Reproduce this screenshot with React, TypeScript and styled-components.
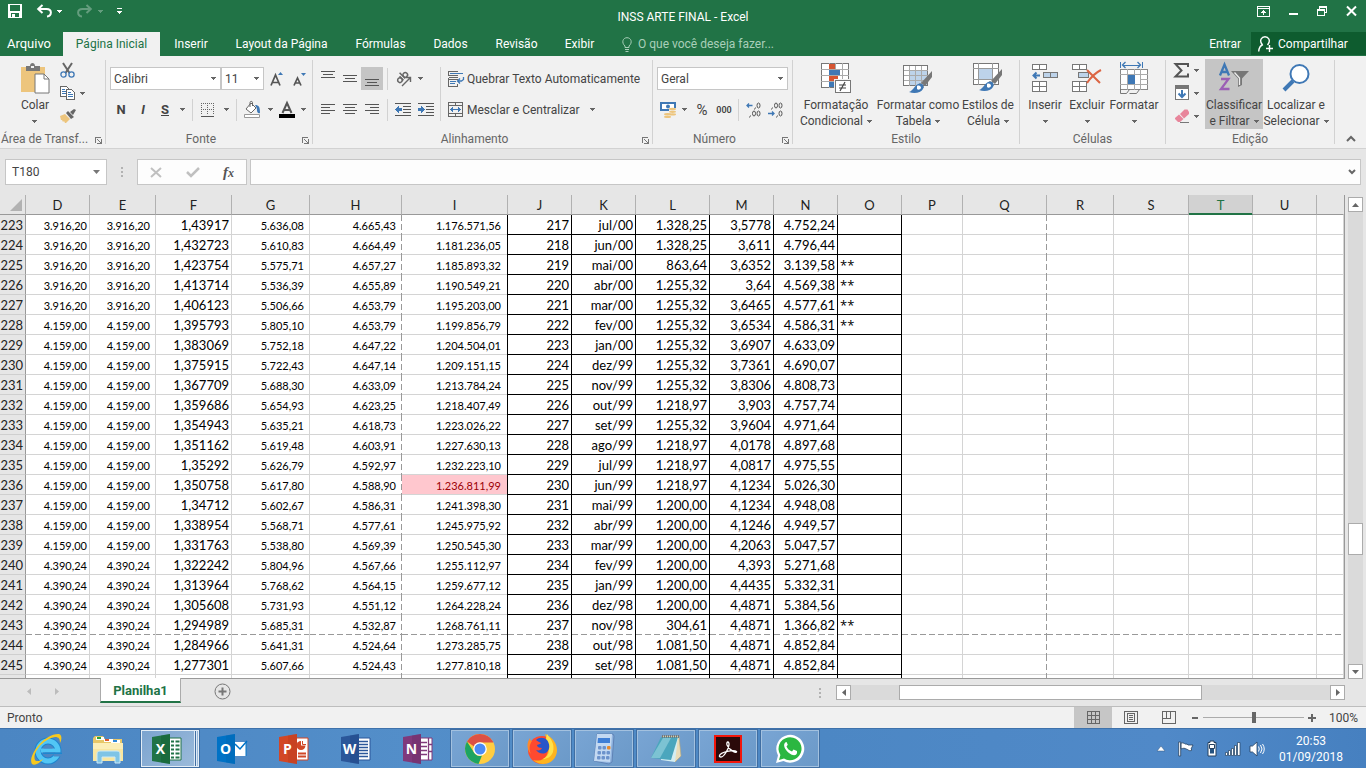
import React from "react";
import styled, { createGlobalStyle, css } from "styled-components";

const UI = `Roboto, "Open Sans", sans-serif`;
const CELL = `Lato, "Open Sans", sans-serif`;

const Global = createGlobalStyle`
  * { box-sizing: border-box; }
  body { margin: 0; background: #e6e6e6; font-family: ${UI}; font-size: 12px; color: #444; overflow: hidden; }
  button, select, input { font-family: inherit; font-size: inherit; color: inherit; }
  button { border: 0; background: none; padding: 0; }
  svg { display: block; flex: none; overflow: visible; }
`;

const Window = styled.div`
  display: flex;
  flex-direction: column;
  height: 100vh;
`;

/* ---------- title bar ---------- */

const TitleBar = styled.header`
  display: grid;
  grid-template-columns: 1fr auto 1fr;
  align-items: center;
  height: 32px;
  flex: none;
  background: #217346;
  color: #fff;
`;

const QuickAccess = styled.div`
  display: flex;
  align-items: center;
  height: 22px;
  align-self: start;
  padding-left: 8px;
`;

const IconButton = styled.button<{ $w?: number; $ml?: number; $faded?: boolean }>`
  display: flex;
  align-items: center;
  justify-content: center;
  flex: none;
  width: ${(p) => (p.$w ? `${p.$w}px` : "auto")};
  margin-left: ${(p) => p.$ml ?? 0}px;
  opacity: ${(p) => (p.$faded ? 0.3 : 1)};
`;

const WindowTitle = styled.h1`
  margin: 0;
  padding-top: 2px;
  font-size: 12px;
  font-weight: 400;
  line-height: 30px;
`;

const WindowButtons = styled.div`
  display: flex;
  align-items: center;
  justify-content: flex-end;
  align-self: start;
  height: 22px;
  gap: 19px;
  padding-right: 9px;
`;

/* ---------- ribbon tabs ---------- */

const TabRow = styled.nav`
  display: flex;
  height: 24px;
  flex: none;
  background: #217346;
  color: #fff;
`;

const Tab = styled.button<{ $w: number; $active?: boolean; $file?: boolean }>`
  width: ${(p) => p.$w}px;
  line-height: 24px;
  white-space: nowrap;
  text-align: center;
  ${(p) => p.$file && css`padding-right: 5px; font-size: 13px;`}
  ${(p) => p.$active && css`background: #f1f1f1; color: #217346;`}
`;

const TellMe = styled.button`
  display: flex;
  align-items: center;
  gap: 6px;
  margin-left: 15px;
  color: #a9cfb9;
`;

const SignIn = styled.button`
  margin-left: auto;
  padding: 0 10px;
`;

const Share = styled.button`
  display: flex;
  align-items: center;
  gap: 4px;
  width: 115px;
  height: 23px;
  padding-left: 7px;
  background: #0e5c2f;
`;

/* ---------- ribbon ---------- */

const RibbonBar = styled.section`
  display: flex;
  height: 93px;
  flex: none;
  background: #f1f1f1;
  border-bottom: 1px solid #d2d2d2;
`;

const Group = styled.div<{ $w: number }>`
  display: flex;
  flex-direction: column;
  width: ${(p) => p.$w}px;
  flex: none;
`;

const GroupBody = styled.div<{ $pad?: number }>`
  display: flex;
  flex: 1;
  padding: 3px 0 0 ${(p) => p.$pad ?? 0}px;
`;

const GroupFooter = styled.div<{ $plain?: boolean }>`
  display: grid;
  grid-template-columns: ${(p) => (p.$plain ? "1fr" : "1fr 16px")};
  align-items: center;
  height: 16px;
  margin-bottom: 1px;
  color: #666;
  text-align: center;
  white-space: nowrap;

  svg { justify-self: end; margin: 2px 3px 0 0; }
`;

const Separator = styled.div<{ $h?: number }>`
  width: 1px;
  flex: none;
  height: ${(p) => (p.$h ? `${p.$h}px` : "auto")};
  margin: ${(p) => (p.$h ? "0" : "4px 0")};
  background: #d2d2d2;
`;

const BigButton = styled.button<{ $w: number; $on?: boolean }>`
  display: flex;
  flex-direction: column;
  align-items: center;
  gap: 3px;
  width: ${(p) => p.$w}px;
  height: 70px;
  padding-top: 3px;
  flex: none;
  line-height: 16px;
  white-space: nowrap;
  background: ${(p) => (p.$on ? "#c5c5c5" : "transparent")};
`;

const BigIcon = styled.span`
  display: flex;
  align-items: center;
  justify-content: center;
  height: 32px;
`;

const Caption = styled.span`
  display: flex;
  flex-direction: column;
  align-items: center;
`;

const CaptionLine = styled.span`
  display: flex;
  align-items: center;
  justify-content: center;
  gap: 4px;
  height: 16px;
`;

const Stack = styled.div<{ $ml?: number; $gap?: number; $top?: number }>`
  display: flex;
  flex-direction: column;
  margin-left: ${(p) => p.$ml ?? 0}px;
  padding-top: ${(p) => p.$top ?? 8}px;
  gap: ${(p) => p.$gap ?? 8}px;
`;

const ToolRow = styled.div<{ $gap?: number }>`
  display: flex;
  align-items: center;
  height: 23px;
  gap: ${(p) => p.$gap ?? 0}px;
`;

const SmallRow = styled.div`
  display: flex;
  align-items: center;
  gap: 5px;
  height: 18px;
`;

const Tool = styled.button<{ $w: number; $on?: boolean }>`
  display: flex;
  align-items: center;
  justify-content: center;
  width: ${(p) => p.$w}px;
  height: 23px;
  flex: none;
  background: ${(p) => (p.$on ? "#c5c5c5" : "transparent")};
`;

const SmallTool = styled(Tool)`
  height: 18px;
`;

const LetterTool = styled(Tool)`
  font-size: 13px;
  font-weight: 700;
`;

const PercentTool = styled(Tool)`
  font-size: 15px;
`;

const ThousandTool = styled(Tool)`
  font-size: 9px;
  font-weight: 600;
`;

const Spacer = styled.span<{ $w: number }>`
  width: ${(p) => p.$w}px;
  flex: none;
`;

const TextTool = styled.button`
  display: flex;
  align-items: center;
  gap: 3px;
  height: 23px;
  white-space: nowrap;
`;

const SelectBox = styled.label<{ $w: number }>`
  display: grid;
  align-items: center;
  width: ${(p) => p.$w}px;
  height: 23px;
  flex: none;
  border: 1px solid #c6c6c6;
  background: #fff;

  & > * { grid-area: 1 / 1; }
  & > svg { justify-self: end; margin-right: 4px; pointer-events: none; }
`;

const Select = styled.select`
  appearance: none;
  width: 100%;
  height: 100%;
  border: 0;
  padding: 0 3px;
  background: transparent;
  outline: none;
`;

const Collapse = styled.button`
  align-self: flex-end;
  margin: 0 auto 3px;
  padding: 3px;
`;

/* ---------- formula bar ---------- */

const FormulaRow = styled.section`
  display: flex;
  align-items: center;
  height: 46px;
  flex: none;
  padding: 0 5px;
`;

const NameBox = styled.label`
  display: flex;
  align-items: center;
  width: 102px;
  height: 26px;
  padding: 0 6px;
  border: 1px solid #c6c6c6;
  background: #fff;
`;

const NameInput = styled.input`
  width: 100%;
  min-width: 0;
  border: 0;
  padding: 0;
  outline: none;
  background: transparent;
`;

const Grip = styled.span<{ $mx?: number }>`
  display: grid;
  gap: 2px;
  margin: 0 ${(p) => p.$mx ?? 0}px;

  i { width: 2px; height: 2px; background: #b2b2b2; }
`;

const FormulaButtons = styled.div`
  display: flex;
  align-items: center;
  width: 110px;
  height: 26px;
  padding: 0 12px;
  justify-content: space-between;
  border: 1px solid #c6c6c6;
  background: #fdfdfd;
`;

const FxButton = styled.button`
  font-family: "Liberation Serif", serif;
  font-style: italic;
  font-weight: 700;
  font-size: 15px;
  color: #555;

  small { font-size: 12px; }
`;

const FormulaBox = styled.label`
  display: flex;
  align-items: center;
  flex: 1;
  height: 26px;
  margin-left: 3px;
  padding-right: 4px;
  border: 1px solid #c6c6c6;
  background: #fdfdfd;
`;

const FormulaInput = styled(NameInput)`
  padding-left: 4px;
`;

/* ---------- sheet ---------- */

const SheetArea = styled.main`
  display: flex;
  flex: 1;
  min-height: 0;
`;

const SheetView = styled.div`
  flex: 1;
  min-width: 0;
  overflow: hidden;
  border-right: 1px solid #999;
  border-bottom: 1px solid #999;
`;

const Grid = styled.table`
  width: 100%;
  table-layout: fixed;
  border-collapse: separate;
  border-spacing: 0;
  font-family: ${CELL};
  color: #000;
`;

const ColHead = styled.th<{ $on?: boolean; $last?: boolean }>`
  height: 20px;
  padding: 1px 0 0;
  font-size: 13px;
  line-height: 18px;
  font-weight: 400;
  text-align: center;
  background: ${(p) => (p.$on ? "#d2d2d2" : "#e6e6e6")};
  color: ${(p) => (p.$on ? "#217346" : "#222")};
  border-right: 1px solid ${(p) => (p.$last ? "transparent" : "#b1b1b1")};
  border-bottom: 1px solid ${(p) => (p.$on ? "#217346" : "#999")};
  box-shadow: ${(p) => (p.$on ? "inset 0 -1px #217346" : "none")};
`;

const Corner = styled.th`
  padding: 0 3px 3px 0;
  background: #e6e6e6;
  border-right: 1px solid #b1b1b1;
  border-bottom: 1px solid #999;
  vertical-align: bottom;

  svg { margin-left: auto; }
`;

const RowHead = styled.th`
  height: 20px;
  padding: 2px 2px 0 0;
  font-size: 13px;
  line-height: 17px;
  font-weight: 400;
  text-align: right;
  color: #222;
  background: #e6e6e6;
  border-right: 1px solid #999;
  border-bottom: 1px solid #cfcfcf;
`;

const dashV = "repeating-linear-gradient(180deg, #999 0 6px, #fff 6px 9px) right / 1px 100% no-repeat";
const dashH = "repeating-linear-gradient(90deg, #999 0 6px, #fff 6px 9px) bottom / 100% 1px no-repeat";

const Cell = styled.td<{
  $pad: number;
  $small?: boolean;
  $boxed?: boolean;
  $left?: boolean;
  $line?: "black" | "dash";
  $breakBelow?: boolean;
  $flag?: boolean;
}>`
  height: 20px;
  padding: ${(p) => (p.$left ? "2px 0 1px 2px" : `2px ${p.$pad + 1}px 1px 0`)};
  font-family: ${(p) => (p.$left ? `"Open Sans", sans-serif` : "inherit")};
  font-size: ${(p) => (p.$small ? 11 : 13)}px;
  line-height: 17px;
  white-space: nowrap;
  text-align: ${(p) => (p.$left ? "left" : "right")};
  color: ${(p) => (p.$flag ? "#9c0006" : "#000")};
  background:
    ${(p) => (p.$line === "dash" ? dashV : `linear-gradient(${p.$line === "black" ? "#000, #000" : "#d4d4d4, #d4d4d4"}) right / 1px 100% no-repeat`)},
    ${(p) => (p.$breakBelow ? dashH : `linear-gradient(${p.$boxed ? "#000, #000" : "#d4d4d4, #d4d4d4"}) bottom / 100% 1px no-repeat`)},
    ${(p) => (p.$flag ? "#ffc7ce" : "#fff")};
`;

const VScroll = styled.div`
  display: flex;
  flex-direction: column;
  width: 21px;
  flex: none;
  padding: 2px 3px 0;
`;

const ScrollButton = styled.button`
  display: flex;
  align-items: center;
  justify-content: center;
  width: 15px;
  height: 15px;
  flex: none;
  border: 1px solid #ababab;
  background: #fff;
`;

const VTrack = styled.div`
  display: grid;
  grid-template-rows: 74fr 32px 26fr;
  flex: 1;
  background: #dadada;
`;

const HTrack = styled.div`
  display: grid;
  grid-template-columns: 27fr 303px 72fr;
  flex: 1;
  height: 15px;
  background: #dadada;
`;

const VThumb = styled.div`
  grid-row: 2;
  border: 1px solid #ababab;
  background: #fff;
`;

const HThumb = styled.div`
  grid-column: 2;
  border: 1px solid #ababab;
  background: #fff;
`;

/* ---------- sheet tabs and status ---------- */

const SheetTabs = styled.section`
  display: flex;
  align-items: flex-start;
  height: 28px;
  flex: none;
  border-bottom: 1px solid #bdbdbd;
`;

const TabNav = styled.div`
  display: flex;
  align-items: center;
  gap: 24px;
  width: 100px;
  height: 25px;
  padding-left: 27px;
  flex: none;
`;

const SheetTab = styled.button`
  position: relative;
  width: 81px;
  height: 25px;
  margin-top: -1px;
  padding-top: 2px;
  flex: none;
  border-left: 1px solid #ababab;
  border-right: 1px solid #ababab;
  border-bottom: 2px solid #217346;
  background: #fff;
  color: #217346;
  font-size: 13px;
  font-weight: 700;
`;

const AddSheet = styled.button`
  margin: 4px 0 0 33px;
`;

const HScroll = styled.div`
  display: flex;
  align-items: center;
  width: 547px;
  flex: none;
  margin-left: auto;
  padding: 6px 21px 0 0;
`;

const HBar = styled.div`
  display: flex;
  flex: 1;
  margin-left: 15px;
`;

const StatusBar = styled.footer`
  display: flex;
  align-items: center;
  height: 21px;
  flex: none;
  padding: 0 8px 0 7px;
  background: #f1f1f1;
  color: #444;
`;

const StatusTools = styled.div`
  display: flex;
  align-items: center;
  margin-left: auto;
`;

const ViewButton = styled.button<{ $on?: boolean }>`
  display: flex;
  align-items: center;
  justify-content: center;
  width: 38px;
  height: 21px;
  background: ${(p) => (p.$on ? "#c6c6c6" : "transparent")};
`;

const Zoom = styled.input`
  appearance: none;
  width: 101px;
  height: 15px;
  margin: 0 1px;
  background: linear-gradient(#ababab, #ababab) center / 100% 1px no-repeat;

  &::-webkit-slider-thumb {
    appearance: none;
    width: 4px;
    height: 11px;
    background: #666;
  }
`;

const Percent = styled.span`
  width: 39px;
  text-align: right;
`;

/* ---------- taskbar ---------- */

const Taskbar = styled.nav`
  display: flex;
  height: 40px;
  flex: none;
  padding-left: 16px;
  border-top: 1px solid #3f72ab;
  background: linear-gradient(90deg, #4b86c3, #538ec9 30%, #4c87c4 60%, #5089c8 85%, #4680c0);
`;

const TaskButton = styled.button<{ $state?: "open" | "active" }>`
  display: flex;
  align-items: center;
  justify-content: center;
  width: 60px;
  height: 39px;
  margin-right: 2px;
  flex: none;
  ${(p) => p.$state && css`
    border: 1px solid #3f6ea3;
    box-shadow: inset 0 0 0 1px ${p.$state === "active" ? "#e3edf6" : "#a3c1df"};
    background: linear-gradient(135deg, #79a5d4, #6b99c8);
  `}
  ${(p) => p.$state === "active" && css`
    padding-right: 6px;
    background:
      linear-gradient(90deg, #dfeaf5 0 1px, #3f6ea3 1px 2px, #dfeaf5 2px 3px) calc(100% - 2px) 0 / 3px 100% no-repeat,
      linear-gradient(135deg, #7ba3cf, #9dbcdb);
  `}
`;

const Tray = styled.div`
  display: flex;
  align-items: center;
  margin-left: auto;
  color: #fff;
`;

const Clock = styled.time`
  display: flex;
  flex-direction: column;
  align-items: center;
  width: 101px;
  height: 39px;
  padding: 4px 9px 0 0;
  line-height: 16px;
`;

/* ---------- small drawings ---------- */

const Arrow = ({ color = "#666" }: { color?: string }) => (
  <svg width="5" height="3" viewBox="0 0 5 3" shapeRendering="crispEdges">
    <path d="M0 0h5v1H4v1H3v1H2V2H1V1H0z" fill={color} />
  </svg>
);

const Launcher = () => (
  <svg width="7" height="7" viewBox="0 0 7 7" shapeRendering="crispEdges" fill="#777">
    <path d="M0 0h6v1H1v5H0zM2 2h1v1h1v1h1v1h1V2h1v5H2V6h3V5H4V4H3V3H2z" />
  </svg>
);

const Lines = ({ rows, top = 0, h = 15 }: { rows: [number, number][]; top?: number; h?: number }) => (
  <svg width="14" height={h} viewBox={`0 0 14 ${h}`} shapeRendering="crispEdges">
    {rows.map(([x, w], i) => (
      <rect key={i} x={x} y={top + i * 3} width={w} height="1" fill="#555" />
    ))}
  </svg>
);

const IndentIcon = ({ right }: { right?: boolean }) => (
  <svg width="16" height="13" viewBox="0 0 16 13" shapeRendering="crispEdges">
    <path d="M0 0h16v1H0zM8 3h8v1H8zM8 6h8v1H8zM8 9h8v1H8zM0 12h16v1H0z" fill="#555" />
    <path d={right ? "M0 5h3V3h1v1h1v1h1v1h1v1H6v1H5v1H4v1H3V8H0z" : "M7 5H4V3H3v1H2v1H1v1H0v1h1v1h1v1h1v1h1V8h3z"} fill="#3f78b5" />
  </svg>
);

const Brush = () => (
  <g>
    <path d="M29 0v6l-7 9-4-3z" fill="#777" />
    <path d="M17 12l4 4-2 2-4-4z" fill="#fff" stroke="#777" strokeWidth=".6" />
    <path d="M15 13c4-2 7 2 5 5-2 4-9 5-14 3 4-1 5-6 9-8z" fill="#3f78b5" />
    <path d="M14 15c2-1 4 0 4 2-1 2-3 2-4 1z" fill="#fff" />
  </g>
);

const SaveIcon = () => (
  <svg width="14" height="14" viewBox="0 0 14 14" shapeRendering="crispEdges">
    <path d="M0 0h14v14H0zM2 1v6h10V1zM3 9v4h1v-3h3v3h4V9z" fill="#fff" fillRule="evenodd" />
  </svg>
);

const UndoIcon = ({ flip }: { flip?: boolean }) => (
  <svg width="15" height="13" viewBox="0 0 15 13">
    <g transform={flip ? "translate(15 0) scale(-1 1)" : undefined} fill="none" stroke="#fff" strokeWidth="2">
      <path d="M2 4h7.500c6 0 5.500 7 0.500 7.500" />
      <path d="M5.500 0L1.200 4l4.300 4" />
    </g>
  </svg>
);

const ClipboardIcon = () => (
  <svg width="28" height="32" viewBox="1 0 28 32">
    <path d="M1 5h24v25H1z" fill="#edc57d" />
    <path d="M6 4h4c0-4 5-4 5 0h5v5H6z" fill="#777" />
    <path d="M11 4h3v2h-3z" fill="#f1f1f1" />
    <path d="M15 12h9l5 5v14H15z" fill="#fff" stroke="#777" />
    <path d="M24 12v5h5" fill="none" stroke="#777" />
  </svg>
);

const ScissorsIcon = () => (
  <svg width="15" height="15" viewBox="0 0 15 15" fill="none">
    <path d="M3 0l6.500 10M12 0L5.500 10" stroke="#666" strokeWidth="2" />
    <circle cx="3.500" cy="11.500" r="2.600" stroke="#3f78b5" strokeWidth="1.300" />
    <circle cx="11.500" cy="11.500" r="2.600" stroke="#3f78b5" strokeWidth="1.300" />
  </svg>
);

const CopyIcon = () => (
  <svg width="15" height="14" viewBox="0 0 15 14" shapeRendering="crispEdges">
    <path d="M.5.500h6l2 2v8h-8z" fill="#fff" stroke="#666" />
    <path d="M2 3h3v1H2zM2 5h4v1H2zM2 7h4v1H2z" fill="#3f78b5" />
    <path d="M6.500 3.500h5l3 3v7h-8z" fill="#fff" stroke="#666" />
    <path d="M8 6h3v1H8zM8 8h5v1H8zM8 10h5v1H8z" fill="#3f78b5" />
  </svg>
);

const PainterIcon = () => (
  <svg width="16" height="14" viewBox="0 0 16 14">
    <path d="M0 7l5-2 5 5-4 4H5l-1-2-1 1-1-2-1 0z" fill="#edc57d" />
    <path d="M6 4l2-2 6 6-3 2zM10 3l4-3 2 1-3 5z" fill="#666" />
  </svg>
);

const BordersIcon = () => (
  <svg width="13" height="14" viewBox="0 0 13 14" shapeRendering="crispEdges">
    <path d="M0 .5h13M0 6.500h13M.5 0v12M6.500 0v12M12.500 0v12" stroke="#666" strokeDasharray="1 1" />
    <path d="M0 13h13v1H0z" fill="#555" />
  </svg>
);

const BucketIcon = () => (
  <svg width="17" height="17" viewBox="0 0 17 17">
    <path d="M7 2l5 5-5 5-5-4z" fill="#fff" stroke="#666" />
    <path d="M6 6V1.500c0-1.500 2.500-1.500 2.500 0V5" fill="none" stroke="#666" />
    <path d="M11 4c4 0 5 2 5 8-2 1-3-1-3-3 0-2-1-3-2-5z" fill="#3f78b5" />
    <path d="M.5 13.500h15v3H.5z" fill="#fff" stroke="#999" />
  </svg>
);

const FontColorIcon = () => (
  <svg width="16" height="16" viewBox="0 0 16 16">
    <path d="M3.500 11L8 1l4.500 10M5 8h6" fill="none" stroke="#555" strokeWidth="2" />
    <path d="M0 12h16v4H0z" fill="#000" />
  </svg>
);

const GrowFont = ({ down }: { down?: boolean }) => (
  <svg width="14" height="16" viewBox="0 0 14 16">
    <path d={down ? "M1 14.500L4.500 7 8 14.500M2.500 12h4" : "M1 14.500L5.500 4 10 14.500M2.500 11.500h6"} fill="none" stroke="#555" strokeWidth="1.700" />
    <path d={down ? "M8 2h5l-2.500 3z" : "M8 4h5l-2.500-3z"} fill="#3f78b5" />
  </svg>
);

const OrientationIcon = () => (
  <svg width="17" height="16" viewBox="0 0 17 16">
    <g transform="translate(6 6) rotate(-45)" fill="none" stroke="#666" strokeWidth="1.500">
      <circle cx="-3" cy="1.500" r="2.300" />
      <path d="M-.5-1.500v5.500M2-4v8" />
      <circle cx="4.500" cy="1.500" r="2.300" />
    </g>
    <path d="M7 15l8-8M15.500 11V6.500H11" fill="none" stroke="#666" strokeWidth="1.400" />
  </svg>
);

const WrapIcon = () => (
  <svg width="16" height="16" viewBox="0 0 16 16" shapeRendering="crispEdges" fill="none">
    <path d="M9.500.500h-9v4h9M.5 6.500h9M.5 8.500v-2M9.500 8.500h-9v7h9v-3" stroke="#666" />
    <path d="M2 2.500h13M2 10.500h6M2 12.500h5" stroke="#3f78b5" />
    <path d="M15.500 6v2.500l-2 1.500h-4M12 7.500L9.500 10 12 12.500" stroke="#3f78b5" shapeRendering="auto" strokeWidth="1.300" />
  </svg>
);

const MergeIcon = () => (
  <svg width="16" height="15" viewBox="0 0 16 15" shapeRendering="crispEdges" fill="none">
    <path d="M.5.500h14v14H.5zM.5 3.500h14M.5 11.500h14M7.500 0v4M7.500 11v4" stroke="#666" />
    <path d="M2 7h11v1H2zM4 5h1v5H4zM10 5h1v5h-1zM3 6h1v3H3zM11 6h1v3h-1z" fill="#3f78b5" />
  </svg>
);

const CurrencyIcon = () => (
  <svg width="17" height="16" viewBox="0 0 17 16">
    <path d="M0 0h16v9H0z" fill="#3f78b5" />
    <path d="M2 2h12v5H2z" fill="#fff" />
    <circle cx="8" cy="4.500" r="2" fill="#3f78b5" />
    <path d="M9 6h7v9H9zM4 11h7v5H4z" fill="#f1f1f1" />
    <g fill="#edc57d">
      <ellipse cx="12.500" cy="7" rx="3.500" ry="1.300" />
      <ellipse cx="12.500" cy="9.800" rx="3.500" ry="1.100" />
      <ellipse cx="12.500" cy="12.400" rx="3.500" ry="1.100" />
      <ellipse cx="7.500" cy="12.200" rx="3.500" ry="1.200" />
      <ellipse cx="7.500" cy="14.900" rx="3.500" ry="1.100" />
    </g>
  </svg>
);

const zero = (x: number, y: number) => <ellipse key={`${x}-${y}`} cx={x} cy={y} rx="1.500" ry="2.500" />;

const DecimalIcon = ({ less }: { less?: boolean }) => (
  <svg width="16" height="16" viewBox="0 0 16 16" fill="none" stroke="#555">
    {less ? [zero(8, 3.5), zero(12.5, 3.5), zero(12.5, 11.5)] : [zero(12.5, 3.5), zero(8, 11.5), zero(12.5, 11.5)]}
    <path d={less ? "M4.500 5.500l-1 2M9.500 13.500l-1 2" : "M9.500 5.500l-1 2M4.500 13.500l-1 2"} />
    <path d={less ? "M0 11.500h6M4 9.500l2 2-2 2" : "M6.500 3.500h-5M3 1.500l-2 2 2 2"} stroke="#3f78b5" strokeWidth="1.300" />
  </svg>
);

const ConditionalIcon = () => (
  <svg width="30" height="31" viewBox="0 0 30 31" shapeRendering="crispEdges">
    <path d="M.5.500h27v24H.5z" fill="#fff" stroke="#777" />
    <path d="M0 6.500h28M0 12.500h28M0 18.500h28M8.500 0v25M14.500 0v25M21.500 0v25" stroke="#aaa" />
    <path d="M8 1h6v5H8zM8 13h9v5H8z" fill="#d65532" />
    <path d="M8 7h11v5H8zM8 19h5v5H8z" fill="#3f78b5" />
    <path d="M13 16h17v15H13z" fill="#f1f1f1" />
    <path d="M14.500 17.500h15v12h-15z" fill="#fff" stroke="#777" />
    <path d="M18 22h7M18 25h7M24 19l-5 9" stroke="#444" strokeWidth="1.200" shapeRendering="auto" />
  </svg>
);

const TableIcon = () => (
  <svg width="30" height="30" viewBox="0 0 30 30">
    <g shapeRendering="crispEdges">
      <path d="M.5 2.500h24v20H.5z" fill="#fff" stroke="#777" />
      <path d="M7 8h17v14H7z" fill="#bdd3ea" />
      <path d="M1 7.500h24M1 12.500h24M1 17.500h24M6.500 3v20M12.500 3v20M18.500 3v20" stroke="#aaa" />
    </g>
    <g transform="translate(0 8)"><Brush /></g>
  </svg>
);

const StylesIcon = () => (
  <svg width="30" height="30" viewBox="0 0 30 30">
    <g shapeRendering="crispEdges">
      <path d="M.5.500h25v21H.5z" fill="#fff" stroke="#777" />
      <path d="M6 6h13v10H6z" fill="#bdd3ea" />
      <path d="M0 5.500h26M0 16.500h26M5.500 0v22M19.500 0v22" stroke="#999" />
    </g>
    <g transform="translate(0 6)"><Brush /></g>
  </svg>
);

const InsertIcon = () => (
  <svg width="26" height="28" viewBox="0 0 26 28" shapeRendering="crispEdges">
    <path d="M.5.500h14v5H.5zM7.500 0v6M.5 17.500h14v10H.5zM7.500 17v11M0 22.500h15" fill="#fff" stroke="#777" />
    <path d="M7.500 0v6M7.500 17v11M0 22.500h15" stroke="#777" />
    <path d="M11.500 8.500h14v5h-14z" fill="#bdd3ea" stroke="#777" />
    <path d="M18.500 8v6" stroke="#777" />
    <path d="M2 11.500h6M4.500 8.500l-3 3 3 3" fill="none" stroke="#3f78b5" strokeWidth="2" shapeRendering="auto" />
  </svg>
);

const DeleteIcon = () => (
  <svg width="30" height="28" viewBox="0 0 30 28" shapeRendering="crispEdges">
    <path d="M.5.500h14v5H.5zM.5 17.500h14v10H.5z" fill="#fff" stroke="#777" />
    <path d="M7.500 0v6M7.500 17v11M0 22.500h15" stroke="#777" />
    <path d="M6.500 8.500h10v5h-10z" fill="#bdd3ea" stroke="#777" />
    <path d="M15 6l13 13M29 6c-6 3-10 7-14 13" fill="none" stroke="#dc6543" strokeWidth="2" shapeRendering="auto" />
  </svg>
);

const FormatIcon = () => (
  <svg width="28" height="32" viewBox="0 0 28 32" shapeRendering="crispEdges">
    <path d="M.5 0v6M22.500 0v6M3 3h17" stroke="#3f78b5" />
    <path d="M5.500 0L2.500 3l3 3M17.500 0l3 3-3 3" fill="none" stroke="#3f78b5" strokeWidth="1.300" shapeRendering="auto" />
    <path d="M.5 7.500h27v20H.5z" fill="#fff" stroke="#888" />
    <path d="M0 12.500h28M0 22.500h28M7.500 7v21M14.500 7v5M14.500 23v5M20.500 7v21M20 17.500h8" stroke="#aaa" />
    <path d="M8 13h7v9H8z" fill="#3f78b5" />
    <path d="M.5 27v4.500h6l3-4M9.500 31.500h7l3-4" fill="none" stroke="#777" shapeRendering="auto" />
  </svg>
);

const SigmaIcon = () => (
  <svg width="15" height="15" viewBox="0 0 15 15">
    <path d="M14 4V1H1.500l6 6.500-6 6H14v-3" fill="none" stroke="#555" strokeWidth="2" />
  </svg>
);

const FillIcon = () => (
  <svg width="14" height="16" viewBox="0 0 14 16" shapeRendering="crispEdges">
    <path d="M.5.500h13v14H.5z" fill="#fff" stroke="#777" />
    <path d="M0 0h14v4H0z" fill="#777" />
    <path d="M7 5v7M3.500 8.500L7 12l3.500-3.500" fill="none" stroke="#3f78b5" strokeWidth="2" shapeRendering="auto" />
  </svg>
);

const EraserIcon = () => (
  <svg width="14" height="14" viewBox="0 0 14 14">
    <path d="M5 5l4.500-4.500h3L14 3v2L9 9.500z" fill="#e8859b" />
    <path d="M0 9l4-3.500L8.500 10 5 13H3L0 10z" fill="#e8859b" />
    <path d="M5 13.500h9" stroke="#777" />
  </svg>
);

const SortIcon = () => (
  <svg width="30" height="30" viewBox="0 0 30 30">
    <path d="M1 12.500L5.500 1.500l4.500 11M2.500 9h6" fill="none" stroke="#3f78b5" strokeWidth="2.300" />
    <path d="M2 16h7.500l-7.500 10h8.500" fill="none" stroke="#9b5fb5" strokeWidth="2.300" />
    <path d="M12 8h18l-7 7.500V22l-4 2v-8.500z" fill="#777" />
    <path d="M15.500 9.500l5 5.500v7" fill="none" stroke="#eee" strokeWidth="1.300" />
  </svg>
);

const FindIcon = () => (
  <svg width="28" height="28" viewBox="0 0 28 28">
    <circle cx="17.500" cy="10" r="9" fill="#fff" stroke="#3f78b5" strokeWidth="2" />
    <path d="M11 17l-9 9" stroke="#3f78b5" strokeWidth="4" />
  </svg>
);

const ShareIcon = () => (
  <svg width="16" height="16" viewBox="0 0 16 16" fill="none" stroke="#fff">
    <path d="M4.500 9C.5 4 4 .7 7 .7s6.500 3.300 2.500 8.300M5 8.500C2.500 9.500 1 11.500.7 15.500" strokeWidth="1.400" />
    <path d="M8 12.500h7M11.500 9v7" strokeWidth="1.400" />
  </svg>
);

/* ---------- application icons ---------- */

const Office = ({ letter, color, dark, children }: { letter: string; color: string; dark: string; children: React.ReactNode }) => (
  <svg width="30" height="30" viewBox="0 0 30 30">
    <path d="M17 4h12v22H17z" fill="#fff" stroke={color} />
    {children}
    <path d="M0 3l18-3v30L0 27z" fill={color} />
    <path d="M9 1.500L18 0v30l-9-1.500z" fill={dark} opacity=".35" />
    <text x="8.500" y="20" textAnchor="middle" fontFamily="Open Sans, sans-serif" fontSize="14" fontWeight="700" fill="#fff">{letter}</text>
  </svg>
);

const IEIcon = () => (
  <svg width="32" height="32" viewBox="0 0 32 32">
    <circle cx="18" cy="18" r="10" fill="none" stroke="#1d86cf" strokeWidth="7" />
    <circle cx="18" cy="18" r="10" fill="none" stroke="#52c6f5" strokeWidth="5" />
    <path d="M11 15.500h15v4H11z" fill="#52c6f5" />
    <path d="M15 21h17v-1.500h-17zM23 20h9l-1 3.500h-7z" fill="#4b88c5" />
    <path d="M13 19.500h19v1.500H13z" fill="#1d86cf" />
    <path d="M13.500 15.500c1-5 8-5 9 0z" fill="#4b88c5" />
    <path d="M2 31C-3 24 14 0 29 1c3 1 3 5 1 9 0-4-1-6-5-6C13 6 2 20 5 27c1 2 5 1 8-1-4 5-9 7-11 5z" fill="#f7c81e" />
  </svg>
);

const ExplorerIcon = () => (
  <svg width="32" height="30" viewBox="0 0 32 30">
    <path d="M1 4l2-2h8l2 3h17v22H1z" fill="#e7c768" />
    <path d="M4 3h8v3H4z" fill="#fff" /><path d="M5 3h4v2H5z" fill="#2fa33a" />
    <path d="M12 5h9v3h-9z" fill="#fff" /><path d="M13 5h4v2h-4z" fill="#e05a2b" />
    <path d="M19 6h9v3h-9z" fill="#fff" /><path d="M21 6h4v2h-4z" fill="#2f88d8" />
    <path d="M1 9h30v18H1z" fill="#f8e6a0" />
    <path d="M1 9h30v6H1z" fill="#fbeeb8" />
    <path d="M5 20c0-2 1-3 3-3h17c2 0 3 1 3 3v9h-5v-6H10v6H5z" fill="#7fc4e6" stroke="#cdeaf7" />
  </svg>
);

const ChromeIcon = () => (
  <svg width="30" height="30" viewBox="0 0 30 30">
    <circle cx="15" cy="15" r="15" fill="#ffcd41" />
    <path d="M2 7.500A15 15 0 0 1 28 7.500L28.200 8.500H15A6.500 6.500 0 0 0 9 12.500z" fill="#dd5144" />
    <path d="M2 7.500l7 11A6.700 6.700 0 0 0 17 21.500L13.500 29.900A15 15 0 0 1 2 7.500z" fill="#1da462" />
    <circle cx="15" cy="15" r="6.800" fill="#fff" />
    <circle cx="15" cy="15" r="5.500" fill="#4c8bf5" />
  </svg>
);

const FirefoxIcon = () => (
  <svg width="30" height="30" viewBox="0 0 30 30">
    <circle cx="15" cy="16" r="14" fill="#ff4a2f" />
    <path d="M18 0c7 3 12 9 12 16 0 8-6 14-14 14-4 0-8-2-10-4 12 3 20-6 12-26z" fill="#ffb41f" />
    <path d="M20 0c4 5 8 10 6 18-2 5-6 7-10 7 8-4 7-12 3-16 0-3 0-6 1-9z" fill="#ffe14a" />
    <path d="M9 6c3-3 8-3 11 0 3 4 3 9 0 12-4 3-9 1-11-2 3 1 5 0 6-2-3 0-5-1-5-3 2-1 4-1 4-2-2-1-4-2-5-3z" fill="#2a55c9" />
    <path d="M3 4c0 2 1 3 2 3-3 4-3 9-1 13C-1 15 0 8 3 4z" fill="#ff8a2b" />
  </svg>
);

const CalculatorIcon = () => (
  <svg width="22" height="32" viewBox="0 0 22 32">
    <path d="M4 1h16l1 2-2 26-3 2-15-3z" fill="#8eb2de" stroke="#5f83b6" />
    <path d="M4 1h15l-2 28-16-1z" fill="#c3d9f2" />
    <path d="M5 5h12v5H4.500z" fill="#3f7fd6" />
    {[13, 18, 23].map((y, r) => [5, 9.5, 14].map((x) => (
      <rect key={`${x}-${y}`} x={x - r * 0.5} y={y} width="3.500" height="3.500" rx="1" fill={x === 14 && r === 0 ? "#e98b2c" : "#6c93cc"} />
    )))}
  </svg>
);

const NotepadIcon = () => (
  <svg width="30" height="30" viewBox="0 0 30 30">
    <path d="M11 2h17l2 20-6 6z" fill="#e9dcb8" stroke="#b7a676" strokeWidth=".6" />
    <path d="M10 3h17l-3 25-14-2z" fill="#d4eef2" />
    <path d="M10 3h17l-7 23L0 24z" fill="#4ba6bd" />
    <path d="M12 4h8L9 24l-9 0z" fill="#7cc3d3" />
    <path d="M11 2.500h17" stroke="#777" strokeWidth="3" strokeDasharray="1 1" />
  </svg>
);

const AcrobatIcon = () => (
  <svg width="28" height="28" viewBox="0 0 28 28">
    <path d="M1 1h26v26H1z" fill="#2b0a0a" stroke="#f2160b" strokeWidth="2" />
    <path d="M5.500 20.500c1-3 14-6.500 17-4 1 2.500-7-.5-9.500-6.500-1-4 2.500-4 2 0-.5 4-5 12-8 12-1.500 0-1.800-.7-1.500-1.500z" fill="none" stroke="#fff" strokeWidth="1.300" />
  </svg>
);

const WhatsAppIcon = () => (
  <svg width="30" height="30" viewBox="0 0 30 30">
    <path d="M1 29l2-7.500A14 14 0 1 1 8.500 27z" fill="#fff" />
    <path d="M4 26l1.400-5A11.500 11.500 0 1 1 9 24.500z" fill="#2bb741" />
    <path d="M11 8c-4 2-1 8 3 11 4 3 7 3 8 0v-2l-3.500-1.500-1.500 2c-3-1-4.500-3-5.500-5l1.300-1.700L11.500 8z" fill="#fff" />
  </svg>
);

/* ---------- data ---------- */

const columns: { name: string; width?: number; line?: "black" | "dash" }[] = [
  { name: "D", width: 64 },
  { name: "E", width: 66 },
  { name: "F", width: 76 },
  { name: "G", width: 78 },
  { name: "H", width: 92, line: "dash" },
  { name: "I", width: 106, line: "black" },
  { name: "J", width: 64, line: "black" },
  { name: "K", width: 64, line: "black" },
  { name: "L", width: 74, line: "black" },
  { name: "M", width: 64, line: "black" },
  { name: "N", width: 64, line: "black" },
  { name: "O", width: 64, line: "black" },
  { name: "P", width: 61 },
  { name: "Q", width: 84, line: "dash" },
  { name: "R", width: 67 },
  { name: "S", width: 75 },
  { name: "T", width: 64 },
  { name: "U", width: 64 },
  { name: "" },
];

const pads = [2, 5, 2, 5, 5, 6, 2, 2, 2, 2, 2];
const small = [0, 1, 3, 4, 5];

const data = `3.916,20|1,43917|5.636,08|4.665,43|1.176.571,56|jul/00|1.328,25|3,5778|4.752,24|
3.916,20|1,432723|5.610,83|4.664,49|1.181.236,05|jun/00|1.328,25|3,611|4.796,44|
3.916,20|1,423754|5.575,71|4.657,27|1.185.893,32|mai/00|863,64|3,6352|3.139,58|**
3.916,20|1,413714|5.536,39|4.655,89|1.190.549,21|abr/00|1.255,32|3,64|4.569,38|**
3.916,20|1,406123|5.506,66|4.653,79|1.195.203,00|mar/00|1.255,32|3,6465|4.577,61|**
4.159,00|1,395793|5.805,10|4.653,79|1.199.856,79|fev/00|1.255,32|3,6534|4.586,31|**
4.159,00|1,383069|5.752,18|4.647,22|1.204.504,01|jan/00|1.255,32|3,6907|4.633,09|
4.159,00|1,375915|5.722,43|4.647,14|1.209.151,15|dez/99|1.255,32|3,7361|4.690,07|
4.159,00|1,367709|5.688,30|4.633,09|1.213.784,24|nov/99|1.255,32|3,8306|4.808,73|
4.159,00|1,359686|5.654,93|4.623,25|1.218.407,49|out/99|1.218,97|3,903|4.757,74|
4.159,00|1,354943|5.635,21|4.618,73|1.223.026,22|set/99|1.255,32|3,9604|4.971,64|
4.159,00|1,351162|5.619,48|4.603,91|1.227.630,13|ago/99|1.218,97|4,0178|4.897,68|
4.159,00|1,35292|5.626,79|4.592,97|1.232.223,10|jul/99|1.218,97|4,0817|4.975,55|
4.159,00|1,350758|5.617,80|4.588,90|1.236.811,99|jun/99|1.218,97|4,1234|5.026,30|
4.159,00|1,34712|5.602,67|4.586,31|1.241.398,30|mai/99|1.200,00|4,1234|4.948,08|
4.159,00|1,338954|5.568,71|4.577,61|1.245.975,92|abr/99|1.200,00|4,1246|4.949,57|
4.159,00|1,331763|5.538,80|4.569,39|1.250.545,30|mar/99|1.200,00|4,2063|5.047,57|
4.390,24|1,322242|5.804,96|4.567,66|1.255.112,97|fev/99|1.200,00|4,393|5.271,68|
4.390,24|1,313964|5.768,62|4.564,15|1.259.677,12|jan/99|1.200,00|4,4435|5.332,31|
4.390,24|1,305608|5.731,93|4.551,12|1.264.228,24|dez/98|1.200,00|4,4871|5.384,56|
4.390,24|1,294989|5.685,31|4.532,87|1.268.761,11|nov/98|304,61|4,4871|1.366,82|**
4.390,24|1,284966|5.641,31|4.524,64|1.273.285,75|out/98|1.081,50|4,4871|4.852,84|
4.390,24|1,277301|5.607,66|4.524,43|1.277.810,18|set/98|1.081,50|4,4871|4.852,84|`
  .split("\n")
  .map((line, i) => {
    const [d, f, g, h, acc, month, l, m, n, mark] = line.split("|");
    return { row: 223 + i, cells: [d, d, f, g, h, acc, String(217 + i), month, l, m, n, mark] };
  });

const ribbonTabs: [string, number][] = [
  ["Arquivo", 63],
  ["Página Inicial", 97],
  ["Inserir", 62],
  ["Layout da Página", 119],
  ["Fórmulas", 79],
  ["Dados", 61],
  ["Revisão", 71],
  ["Exibir", 55],
];

const Dots = () => (<><i /><i /><i /></>);

const Big = ({ w, icon, lines, on }: { w: number; icon: React.ReactNode; lines: [string, string?]; on?: boolean }) => (
  <BigButton $w={w} $on={on}>
    <BigIcon>{icon}</BigIcon>
    <Caption>
      <CaptionLine>{lines[0]}</CaptionLine>
      <CaptionLine>{lines[1]}<Arrow /></CaptionLine>
    </Caption>
  </BigButton>
);

const SheetCells = ({ row, cells }: { row: number; cells: string[] }) => (
  <>
    {columns.map((c, i) => (
      <Cell
        key={i}
        $pad={pads[i] ?? 2}
        $small={small.includes(i)}
        $boxed={i >= 6 && i <= 11}
        $left={i === 11}
        $line={c.line}
        $breakBelow={row === 243}
        $flag={row === 236 && i === 5}
      >
        {cells[i]}
      </Cell>
    ))}
  </>
);

export default function App() {
  return (
    <Window>
      <Global />
      <TitleBar>
        <QuickAccess>
          <IconButton aria-label="Salvar"><SaveIcon /></IconButton>
          <IconButton aria-label="Desfazer" $ml={15}><UndoIcon /></IconButton>
          <IconButton aria-label="Opções de desfazer" $ml={5}><Arrow color="#fff" /></IconButton>
          <IconButton aria-label="Refazer" $ml={15} $faded><UndoIcon flip /></IconButton>
          <IconButton aria-label="Opções de refazer" $ml={6} $faded><Arrow color="#fff" /></IconButton>
          <IconButton aria-label="Personalizar" $ml={14}>
            <svg width="5" height="6" viewBox="0 0 5 6" shapeRendering="crispEdges"><path d="M0 0h5v1H0zM0 3h5v1H4v1H3v1H2V5H1V4H0z" fill="#fff" /></svg>
          </IconButton>
        </QuickAccess>
        <WindowTitle>INSS ARTE FINAL - Excel</WindowTitle>
        <WindowButtons>
          <IconButton aria-label="Opções da faixa">
            <svg width="13" height="11" viewBox="0 0 13 11" shapeRendering="crispEdges"><path d="M.5.500h12v10H.5zM0 2.500h13" fill="none" stroke="#fff" /><path d="M6 4h1v1h1v1h1v1H7v2H6V7H4V6h1V5h1z" fill="#fff" /></svg>
          </IconButton>
          <IconButton aria-label="Minimizar">
            <svg width="9" height="11" viewBox="0 0 9 11" shapeRendering="crispEdges"><path d="M0 7h9v2H0z" fill="#fff" /></svg>
          </IconButton>
          <IconButton aria-label="Restaurar">
            <svg width="10" height="10" viewBox="0 0 10 10" shapeRendering="crispEdges"><path d="M2 0h8v7H8V6h1V2H3v1H2zM0 3h8v7H0zM1 5v4h6V5z" fill="#fff" fillRule="evenodd" /></svg>
          </IconButton>
          <IconButton aria-label="Fechar">
            <svg width="11" height="10" viewBox="0 0 11 10"><path d="M1 .5l9 9M10 .5l-9 9" stroke="#fff" strokeWidth="2" /></svg>
          </IconButton>
        </WindowButtons>
      </TitleBar>

      <TabRow>
        {ribbonTabs.map(([label, w], i) => (
          <Tab key={label} $w={w} $file={i === 0} $active={i === 1}>{label}</Tab>
        ))}
        <TellMe>
          <svg width="10" height="15" viewBox="0 0 10 15" fill="none" stroke="#a9cfb9"><path d="M3 10.500V9C-1 5.500 1 .7 5 .7S11 5.500 7 9v1.500zM3 12.500h4M3.500 14.500h3" /></svg>
          O que você deseja fazer...
        </TellMe>
        <SignIn>Entrar</SignIn>
        <Share><ShareIcon />Compartilhar</Share>
      </TabRow>

      <RibbonBar>
        <Group $w={105}>
          <GroupBody $pad={10}>
            <Big w={50} icon={<ClipboardIcon />} lines={["Colar", ""]} />
            <Stack $top={2} $gap={5}>
              <SmallTool $w={15} aria-label="Recortar"><ScissorsIcon /></SmallTool>
              <SmallRow><SmallTool $w={15} aria-label="Copiar"><CopyIcon /></SmallTool><Arrow /></SmallRow>
              <SmallTool $w={15} aria-label="Pincel de Formatação"><PainterIcon /></SmallTool>
            </Stack>
          </GroupBody>
          <GroupFooter>Área de Transf...<Launcher /></GroupFooter>
        </Group>
        <Separator />

        <Group $w={206}>
          <GroupBody $pad={4}>
            <Stack>
              <ToolRow>
                <SelectBox $w={111}><Select aria-label="Fonte"><option>Calibri</option></Select><Arrow /></SelectBox>
                <SelectBox $w={43}><Select aria-label="Tamanho da fonte"><option>11</option></Select><Arrow /></SelectBox>
                <Tool $w={26} aria-label="Aumentar fonte"><GrowFont /></Tool>
                <Tool $w={20} aria-label="Diminuir fonte"><GrowFont down /></Tool>
              </ToolRow>
              <ToolRow>
                <LetterTool $w={22} aria-label="Negrito">N</LetterTool>
                <LetterTool $w={22} aria-label="Itálico"><i>I</i></LetterTool>
                <LetterTool $w={22} aria-label="Sublinhado"><u>S</u></LetterTool>
                <Tool $w={12} aria-label="Opções de sublinhado"><Arrow /></Tool>
                <Spacer $w={4} />
                <Separator $h={22} />
                <Tool $w={29} aria-label="Bordas"><BordersIcon /></Tool>
                <Tool $w={8} aria-label="Opções de bordas"><Arrow /></Tool>
                <Spacer $w={6} />
                <Separator $h={22} />
                <Tool $w={30} aria-label="Cor de preenchimento"><BucketIcon /></Tool>
                <Tool $w={7} aria-label="Opções de preenchimento"><Arrow /></Tool>
                <Tool $w={26} aria-label="Cor da fonte"><FontColorIcon /></Tool>
                <Tool $w={7} aria-label="Opções de cor"><Arrow /></Tool>
              </ToolRow>
            </Stack>
          </GroupBody>
          <GroupFooter>Fonte<Launcher /></GroupFooter>
        </Group>
        <Separator />

        <Group $w={339}>
          <GroupBody $pad={4}>
            <Stack>
              <ToolRow>
                <Tool $w={22} aria-label="Alinhar em cima"><Lines rows={[[0, 14], [2, 10], [0, 14]]} /></Tool>
                <Tool $w={22} aria-label="Alinhar no meio"><Lines rows={[[0, 14], [2, 10], [0, 14]]} top={4} /></Tool>
                <Tool $w={22} $on aria-label="Alinhar embaixo"><Lines rows={[[0, 14], [2, 10], [0, 14]]} top={8} /></Tool>
                <Spacer $w={4} />
                <Separator $h={22} />
                <Tool $w={30} aria-label="Orientação"><OrientationIcon /></Tool>
                <Tool $w={5} aria-label="Opções de orientação"><Arrow /></Tool>
              </ToolRow>
              <ToolRow>
                <Tool $w={22} aria-label="Alinhar à esquerda"><Lines h={13} rows={[[0, 14], [0, 9], [0, 14], [0, 9]]} top={1} /></Tool>
                <Tool $w={22} aria-label="Centralizar"><Lines h={13} rows={[[0, 14], [2, 10], [0, 14], [2, 10]]} top={1} /></Tool>
                <Tool $w={22} aria-label="Alinhar à direita"><Lines h={13} rows={[[0, 14], [5, 9], [0, 14], [5, 9]]} top={1} /></Tool>
                <Spacer $w={4} />
                <Separator $h={22} />
                <Tool $w={30} aria-label="Diminuir recuo"><IndentIcon /></Tool>
                <Tool $w={15} aria-label="Aumentar recuo"><IndentIcon right /></Tool>
              </ToolRow>
            </Stack>
            <Stack $ml={7}><Separator $h={54} /></Stack>
            <Stack $ml={7}>
              <TextTool><WrapIcon />Quebrar Texto Automaticamente</TextTool>
              <ToolRow $gap={10}>
                <TextTool><MergeIcon />Mesclar e Centralizar</TextTool>
                <Arrow />
              </ToolRow>
            </Stack>
          </GroupBody>
          <GroupFooter>Alinhamento<Launcher /></GroupFooter>
        </Group>
        <Separator />

        <Group $w={139}>
          <GroupBody $pad={4}>
            <Stack>
              <SelectBox $w={131}><Select aria-label="Formato de número"><option>Geral</option></Select><Arrow /></SelectBox>
              <ToolRow>
                <Tool $w={22} aria-label="Moeda"><CurrencyIcon /></Tool>
                <Tool $w={11} aria-label="Opções de moeda"><Arrow /></Tool>
                <PercentTool $w={24}>%</PercentTool>
                <ThousandTool $w={20}>000</ThousandTool>
                <Spacer $w={4} />
                <Separator $h={22} />
                <Tool $w={30} aria-label="Aumentar casas"><DecimalIcon /></Tool>
                <Tool $w={14} aria-label="Diminuir casas"><DecimalIcon less /></Tool>
              </ToolRow>
            </Stack>
          </GroupBody>
          <GroupFooter>Número<Launcher /></GroupFooter>
        </Group>
        <Separator />

        <Group $w={226}>
          <GroupBody $pad={3}>
            <Big w={80} icon={<ConditionalIcon />} lines={["Formatação", "Condicional"]} />
            <Big w={84} icon={<TableIcon />} lines={["Formatar como", "Tabela"]} />
            <Big w={56} icon={<StylesIcon />} lines={["Estilos de", "Célula"]} />
          </GroupBody>
          <GroupFooter $plain>Estilo</GroupFooter>
        </Group>
        <Separator />

        <Group $w={145}>
          <GroupBody $pad={4}>
            <Big w={42} icon={<InsertIcon />} lines={["Inserir", ""]} />
            <Big w={42} icon={<DeleteIcon />} lines={["Excluir", ""]} />
            <Big w={52} icon={<FormatIcon />} lines={["Formatar", ""]} />
          </GroupBody>
          <GroupFooter $plain>Células</GroupFooter>
        </Group>
        <Separator />

        <Group $w={168}>
          <GroupBody $pad={8}>
            <Stack $top={2} $gap={5}>
              <SmallRow><SmallTool $w={15} aria-label="AutoSoma"><SigmaIcon /></SmallTool><Arrow /></SmallRow>
              <SmallRow><SmallTool $w={15} aria-label="Preencher"><FillIcon /></SmallTool><Arrow /></SmallRow>
              <SmallRow><SmallTool $w={15} aria-label="Limpar"><EraserIcon /></SmallTool><Arrow /></SmallRow>
            </Stack>
            <Stack $top={0} $ml={6}><Big w={58} on icon={<SortIcon />} lines={["Classificar", "e Filtrar"]} /></Stack>
            <Big w={66} icon={<FindIcon />} lines={["Localizar e", "Selecionar"]} />
          </GroupBody>
          <GroupFooter $plain>Edição</GroupFooter>
        </Group>
        <Separator />
        <Collapse aria-label="Recolher faixa">
          <svg width="10" height="6" viewBox="0 0 10 6"><path d="M1 5l4-4 4 4" fill="none" stroke="#666" strokeWidth="2" /></svg>
        </Collapse>
      </RibbonBar>

      <FormulaRow>
        <NameBox>
          <NameInput aria-label="Caixa de nome" defaultValue="T180" />
          <svg width="7" height="4" viewBox="0 0 7 4"><path d="M0 0h7L3.500 4z" fill="#777" /></svg>
        </NameBox>
        <Grip $mx={14}><Dots /></Grip>
        <FormulaButtons>
          <IconButton aria-label="Cancelar">
            <svg width="12" height="11" viewBox="0 0 12 11"><path d="M1 1l10 9M11 1L1 10" stroke="#c0c0c0" strokeWidth="2" /></svg>
          </IconButton>
          <IconButton aria-label="Inserir">
            <svg width="14" height="10" viewBox="0 0 14 10"><path d="M1 5l4 4 8-8" fill="none" stroke="#c0c0c0" strokeWidth="2.500" /></svg>
          </IconButton>
          <FxButton>f<small>x</small></FxButton>
        </FormulaButtons>
        <FormulaBox>
          <FormulaInput aria-label="Barra de fórmulas" />
          <svg width="8" height="6" viewBox="0 0 8 6"><path d="M1 1l3 3 3-3" fill="none" stroke="#666" strokeWidth="2" /></svg>
        </FormulaBox>
      </FormulaRow>

      <SheetArea>
        <SheetView>
          <Grid>
            <colgroup>
              <col width={26} />
              {columns.map((c, i) => <col key={i} width={c.width} />)}
            </colgroup>
            <thead>
              <tr>
                <Corner aria-label="Selecionar tudo">
                  <svg width="12" height="12" viewBox="0 0 12 12"><path d="M12 0v12H0z" fill="#b2b2b2" /></svg>
                </Corner>
                {columns.map((c, i) => (
                  <ColHead key={i} $on={c.name === "T"} $last={!c.name}>{c.name}</ColHead>
                ))}
              </tr>
            </thead>
            <tbody>
              {data.map((r) => (
                <tr key={r.row}>
                  <RowHead>{r.row}</RowHead>
                  <SheetCells row={r.row} cells={r.cells} />
                </tr>
              ))}
              <tr>
                <RowHead />
                <SheetCells row={246} cells={[]} />
              </tr>
            </tbody>
          </Grid>
        </SheetView>
        <VScroll>
          <ScrollButton aria-label="Rolar para cima">
            <svg width="7" height="4" viewBox="0 0 7 4"><path d="M0 4h7L3.500 0z" fill="#666" /></svg>
          </ScrollButton>
          <VTrack><VThumb /></VTrack>
          <ScrollButton aria-label="Rolar para baixo">
            <svg width="7" height="4" viewBox="0 0 7 4"><path d="M0 0h7L3.500 4z" fill="#666" /></svg>
          </ScrollButton>
        </VScroll>
      </SheetArea>

      <SheetTabs>
        <TabNav>
          <svg width="4" height="7" viewBox="0 0 4 7"><path d="M4 0v7L0 3.500z" fill="#bcbcbc" /></svg>
          <svg width="4" height="7" viewBox="0 0 4 7"><path d="M0 0v7l4-3.500z" fill="#bcbcbc" /></svg>
        </TabNav>
        <SheetTab>Planilha1</SheetTab>
        <AddSheet aria-label="Nova planilha">
          <svg width="17" height="17" viewBox="0 0 17 17"><circle cx="8.500" cy="8.500" r="7.500" fill="none" stroke="#777" /><path d="M4.500 8.500h8M8.500 4.500v8" stroke="#777" strokeWidth="2" /></svg>
        </AddSheet>
        <HScroll>
          <Grip><Dots /></Grip>
          <HBar>
            <ScrollButton aria-label="Rolar para a esquerda">
              <svg width="4" height="7" viewBox="0 0 4 7"><path d="M4 0v7L0 3.500z" fill="#666" /></svg>
            </ScrollButton>
            <HTrack><HThumb /></HTrack>
            <ScrollButton aria-label="Rolar para a direita">
              <svg width="4" height="7" viewBox="0 0 4 7"><path d="M0 0v7l4-3.500z" fill="#666" /></svg>
            </ScrollButton>
          </HBar>
        </HScroll>
      </SheetTabs>

      <StatusBar>
        Pronto
        <StatusTools>
          <ViewButton $on aria-label="Normal">
            <svg width="13" height="13" viewBox="0 0 13 13" shapeRendering="crispEdges"><path d="M.5.500h12v12H.5zM4.500 0v13M8.500 0v13M0 4.500h13M0 8.500h13" fill="none" stroke="#666" /></svg>
          </ViewButton>
          <ViewButton aria-label="Layout da Página">
            <svg width="14" height="13" viewBox="0 0 14 13" shapeRendering="crispEdges"><path d="M.5.500h13v12H.5zM3.500 2.500h7v8h-7zM5 4.500h4M5 6.500h4M5 8.500h4" fill="none" stroke="#666" /></svg>
          </ViewButton>
          <ViewButton aria-label="Quebras de página">
            <svg width="14" height="13" viewBox="0 0 14 13" shapeRendering="crispEdges"><path d="M.5.500h13v12H.5zM4.500 0v7M8.500 0v7M0 7.500h9" fill="none" stroke="#666" /></svg>
          </ViewButton>
          <IconButton $w={14} aria-label="Reduzir">
            <svg width="6" height="2" viewBox="0 0 6 2"><path d="M0 0h6v2H0z" fill="#666" /></svg>
          </IconButton>
          <Zoom type="range" min={0} max={100} defaultValue={50} aria-label="Zoom" />
          <IconButton $w={14} aria-label="Ampliar">
            <svg width="8" height="8" viewBox="0 0 8 8"><path d="M3 0h2v3h3v2H5v3H3V5H0V3h3z" fill="#666" /></svg>
          </IconButton>
          <Percent>100%</Percent>
        </StatusTools>
      </StatusBar>

      <Taskbar>
        <TaskButton aria-label="Internet Explorer"><IEIcon /></TaskButton>
        <TaskButton aria-label="Explorador de Arquivos"><ExplorerIcon /></TaskButton>
        <TaskButton $state="active" aria-label="Excel">
          <Office letter="X" color="#217346" dark="#0e5c2f">
            <path d="M19 7.500h3M19 11.500h3M19 15.500h3M19 19.500h3M19 23.500h3M23.500 7.500h4M23.500 11.500h4M23.500 15.500h4M23.500 19.500h4M23.500 23.500h4" stroke="#217346" strokeWidth="2" />
          </Office>
        </TaskButton>
        <TaskButton aria-label="Outlook">
          <Office letter="O" color="#0072c6" dark="#0063ad">
            <path d="M16 3h14v5H16zM16 22h14v5H16z" fill="#508bc7" />
            <path d="M18 10l5 5 7-8" fill="none" stroke="#0072c6" strokeWidth="1.500" />
          </Office>
        </TaskButton>
        <TaskButton aria-label="PowerPoint">
          <Office letter="P" color="#d24726" dark="#b83a1c">
            <circle cx="22" cy="11.500" r="4.500" fill="#d24726" />
            <path d="M22 11.500V6h5.500v5.500z" fill="#fff" /><path d="M23.500 7v3.500h3.500" stroke="#d24726" fill="none" />
            <path d="M19 19.500h8M19 22.500h8" stroke="#d24726" strokeWidth="2" />
          </Office>
        </TaskButton>
        <TaskButton aria-label="Word">
          <Office letter="W" color="#2b579a" dark="#1e4684">
            <path d="M18 7.500h9M18 10.500h9M18 13.500h9M18 16.500h9M18 19.500h9M18 22.500h9" stroke="#2b579a" strokeWidth="1.300" />
          </Office>
        </TaskButton>
        <TaskButton aria-label="OneNote">
          <Office letter="N" color="#80397b" dark="#672c63">
            <path d="M18 8.500h6M18 12.500h6M18 16.500h6M18 20.500h6M25.500 4v22M26 10.500h3M26 17.500h3" stroke="#80397b" strokeWidth="1.300" />
          </Office>
        </TaskButton>
        <TaskButton $state="open" aria-label="Chrome"><ChromeIcon /></TaskButton>
        <TaskButton $state="open" aria-label="Firefox"><FirefoxIcon /></TaskButton>
        <TaskButton $state="open" aria-label="Calculadora"><CalculatorIcon /></TaskButton>
        <TaskButton $state="open" aria-label="Bloco de Notas"><NotepadIcon /></TaskButton>
        <TaskButton $state="open" aria-label="Acrobat Reader"><AcrobatIcon /></TaskButton>
        <TaskButton $state="open" aria-label="WhatsApp"><WhatsAppIcon /></TaskButton>
        <Tray>
          <IconButton aria-label="Ícones ocultos"><svg width="8" height="5" viewBox="0 0 8 5"><path d="M0 5h8L4 0z" fill="#fff" stroke="#33567f" strokeWidth=".5" /></svg></IconButton>
          <IconButton aria-label="Central de Ações" $ml={13}>
            <svg width="16" height="16" viewBox="0 0 16 16"><path d="M.7 1h2v14h-2zM3 2c3-1 4 2 6 1l1 1h5l-2 4 1 1c-3 2-4-1-6-1-1-1-3-1-5 0z" fill="#fff" stroke="#24405f" strokeWidth=".8" /></svg>
          </IconButton>
          <IconButton aria-label="Bateria" $ml={13}>
            <svg width="10" height="17" viewBox="0 0 10 17"><path d="M3 1h4v1.500h2V16H1V2.500h2z" fill="#fff" stroke="#24405f" /><path d="M2.500 4.500h5v4h-5z" fill="#fff" stroke="#24405f" /><path d="M3 9h4v4.500H3z" fill="#24527f" /></svg>
          </IconButton>
          <IconButton aria-label="Rede" $ml={8}>
            <svg width="16" height="14" viewBox="0 0 16 14"><path d="M.5 10.500h2v3h-2zM3.500 8.500h2v5h-2zM6.500 6.500h2v7h-2zM9.500 3.500h2v10h-2zM12.500.500h2.500v13h-2.500z" fill="#fff" stroke="#24405f" strokeWidth=".7" /></svg>
          </IconButton>
          <IconButton aria-label="Volume" $ml={8}>
            <svg width="16" height="16" viewBox="0 0 16 16"><path d="M1 5h2.500L8 1v14l-4.500-4H1z" fill="#fff" stroke="#24405f" strokeWidth=".8" /><path d="M9.500 5.500q1.500 2.500 0 5M11.500 4q3 4 0 8M13.500 3q3.500 5 0 10" fill="none" stroke="#fff" /></svg>
          </IconButton>
          <Clock><span>20:53</span><span>01/09/2018</span></Clock>
        </Tray>
      </Taskbar>
    </Window>
  );
}
